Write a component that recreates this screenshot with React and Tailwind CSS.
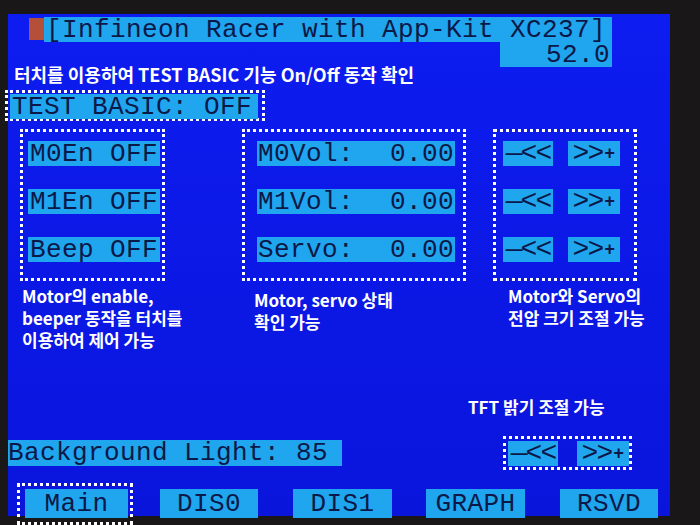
const MONO = "font-['Liberation_Mono',monospace] text-[26px] leading-none tracking-[0.4px] text-[#0c1848] whitespace-nowrap";
const CYAN = "bg-[#1fa6ee]";
const NOTE = "font-['Noto_Sans_CJK_KR',sans-serif] font-bold text-[17px] leading-[22px] text-white whitespace-nowrap";
const DOTS = "border-[3px] border-dotted border-white";

function Bar({ className = "", children }) {
  return <div className={`${CYAN} ${MONO} flex items-center h-[25px] ${className}`}>{children}</div>;
}

function MinusBtn({ className = "" }) {
  return (
    <Bar className={`w-[50px] justify-center ${className}`}>
      <span className="tracking-[-2px] text-[28px]">{"\u2014<<"}</span>
    </Bar>
  );
}

function PlusBtn({ className = "" }) {
  return (
    <Bar className={`w-[52px] justify-center ${className}`}>
      <span className="tracking-[-2px] text-[28px]">{">>"}</span>
      <span className="text-[18px] font-bold ml-[2px]">+</span>
    </Bar>
  );
}

export default function App() {
  return (
    <div className="w-[700px] h-[525px] bg-[#1a1718] overflow-hidden pt-[14px] pl-[8px]">
      <div className="w-[662px] h-[502px] bg-gradient-to-b from-[#0d1cf0] to-[#0a15dc] flex flex-col">
        {/* title */}
        <div className="flex mt-[3px] ml-[21px] h-[25px]">
          <div className="w-[15px] h-[22px] mt-[1px] bg-[#b4503a]" />
          <Bar className="w-[568px] pl-[2px]">[Infineon Racer with App-Kit XC237]</Bar>
        </div>
        <Bar className="ml-[492px] w-[112px] h-[21px] justify-end pr-[2px]">52.0</Bar>

        <p className={`${NOTE} text-[18px] mt-[-4px] ml-[6px]`}>
          터치를 이용하여 TEST BASIC 기능 On/Off 동작 확인
        </p>

        {/* test basic */}
        <div className={`${DOTS} mt-[5px] ml-[-3px] w-[260px] h-[31px] pl-[2px] pt-[1px]`}>
          <Bar className="w-[248px] h-[23px] pl-[2px]">TEST BASIC: OFF</Bar>
        </div>

        {/* three groups */}
        <div className="flex mt-[8px]">
          <div className={`${DOTS} ml-[12px] w-[145px] h-[152px] pl-[5px] pt-[9px] flex flex-col gap-[23px]`}>
            <Bar className="w-[132px] pl-[2px]">M0En OFF</Bar>
            <Bar className="w-[132px] pl-[2px]">M1En OFF</Bar>
            <Bar className="w-[132px] pl-[2px]">Beep OFF</Bar>
          </div>
          <div className={`${DOTS} ml-[77px] w-[224px] h-[152px] pl-[12px] pt-[9px] flex flex-col gap-[23px]`}>
            {["M0Vol:", "M1Vol:", "Servo:"].map((l) => (
              <Bar key={l} className="w-[198px] justify-between px-[1px]">
                <span>{l}</span>
                <span>0.00</span>
              </Bar>
            ))}
          </div>
          <div className={`${DOTS} ml-[27px] w-[144px] h-[152px] pl-[7px] pt-[9px] flex flex-col gap-[23px]`}>
            {[0, 1, 2].map((i) => (
              <div key={i} className="flex gap-[15px]">
                <MinusBtn />
                <PlusBtn />
              </div>
            ))}
          </div>
        </div>

        {/* notes */}
        <div className="flex mt-[4px]">
          <p className={`${NOTE} ml-[14px] w-[232px]`}>
            Motor의 enable,
            <br />
            beeper 동작을 터치를
            <br />
            이용하여 제어 가능
          </p>
          <p className={`${NOTE} mt-[4px] w-[254px]`}>
            Motor, servo 상태
            <br />
            확인 가능
          </p>
          <p className={NOTE}>
            Motor와 Servo의
            <br />
            전압 크기 조절 가능
          </p>
        </div>

        <p className={`${NOTE} mt-[45px] ml-[460px]`}>TFT 밝기 조절 가능</p>

        {/* background light */}
        <div className="flex items-center mt-[18px]">
          <Bar className="w-[334px] h-[26px]">Background Light: 85</Bar>
          <div className={`${DOTS} ml-[161px] w-[129px] h-[34px] pl-[2px] pt-[2px] flex gap-[19px]`}>
            <MinusBtn className="w-[48px]" />
            <PlusBtn className="w-[50px]" />
          </div>
        </div>

        {/* tabs */}
        <div className="flex items-start mt-[13px]">
          <div className={`${DOTS} ml-[9px] w-[116px] h-[42px] pl-[5px] pt-[3px]`}>
            <Bar className="w-[103px] h-[29px] justify-center">Main</Bar>
          </div>
          <Bar className="ml-[27px] mt-[6px] w-[98px] h-[29px] justify-center">DIS0</Bar>
          <Bar className="ml-[35px] mt-[6px] w-[99px] h-[29px] justify-center">DIS1</Bar>
          <Bar className="ml-[34px] mt-[6px] w-[99px] h-[29px] justify-center">GRAPH</Bar>
          <Bar className="ml-[35px] mt-[6px] w-[98px] h-[29px] justify-center">RSVD</Bar>
        </div>
      </div>
    </div>
  );
}
